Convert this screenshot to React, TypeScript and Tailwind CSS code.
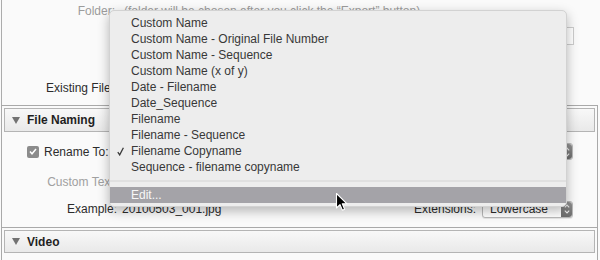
const menuItems = [
  'Custom Name',
  'Custom Name - Original File Number',
  'Custom Name - Sequence',
  'Custom Name (x of y)',
  'Date - Filename',
  'Date_Sequence',
  'Filename',
  'Filename - Sequence',
  'Filename Copyname',
  'Sequence - filename copyname',
]

function Triangle() {
  return (
    <svg width="8" height="7" viewBox="0 0 8 7" className="shrink-0">
      <polygon points="0,0 8,0 4,7" fill="#727272" />
    </svg>
  )
}

function SectionHeader({ title, tall }: { title: string; tall?: boolean }) {
  return (
    <div
      className={`flex items-center gap-[7px] border border-[#b4b4b4] bg-gradient-to-b from-[#f8f8f8] to-[#e9e9e9] pl-[7px] ${
        tall ? 'h-[24px]' : 'h-[23px]'
      }`}
    >
      <Triangle />
      <span className="font-bold text-[#1f1f1f]">{title}</span>
    </div>
  )
}

function Stepper() {
  return (
    <div className="flex w-[11px] shrink-0 flex-col items-center justify-center gap-[2px] rounded-r-[3px] bg-gradient-to-b from-[#929292] to-[#6c6c6c]">
      <svg width="6" height="4" viewBox="0 0 6 4">
        <polyline points="0.8,3.3 3,1 5.2,3.3" fill="none" stroke="#ededed" strokeWidth="1.1" />
      </svg>
      <svg width="6" height="4" viewBox="0 0 6 4">
        <polyline points="0.8,0.7 3,3 5.2,0.7" fill="none" stroke="#ededed" strokeWidth="1.1" />
      </svg>
    </div>
  )
}

function CheckMark() {
  return (
    <svg width="7" height="9" viewBox="0 0 7 9">
      <path d="M0.8 5.2 L2.7 7.9 L6.4 0.8" fill="none" stroke="#3a3a3a" strokeWidth="1.3" />
    </svg>
  )
}

export default function App() {
  return (
    <div className="relative h-[260px] w-[600px] overflow-hidden bg-[#fafafa] font-['Liberation_Sans',Arial,sans-serif] text-[12px] text-[#2c2c2c]">
      {/* export location (partly hidden) */}
      <div className="ml-[1px] h-[105px] border-l border-[#acacac] pt-[3px]">
        <div className="flex h-[16px] items-center text-[#9c9c9c]">
          <div className="w-[113px] text-right">Folder:</div>
          <div className="ml-[9px]">(folder will be chosen after you click the “Export” button)</div>
        </div>
        <div className="mt-[8px] flex h-[18px]">
          <div className="w-[120px]" />
          <div className="w-[452px] border border-[#cdcdcd] bg-white" />
        </div>
        <div className="mt-[35px] flex h-[16px] items-center">
          <div className="w-[118px] text-right">Existing Files:</div>
        </div>
      </div>

      {/* file naming */}
      <div className="ml-[1px] h-[123px] w-[597px] border border-[#a9a9a9] px-[2px] pt-[2px]">
        <SectionHeader title="File Naming" tall />
        <div className="mt-[11px] flex h-[17px] items-center pl-[23px]">
          <div className="flex h-[12px] w-[12px] items-center justify-center rounded-[2px] bg-[#8b8b8b]">
            <svg width="8" height="7" viewBox="0 0 8 7">
              <path d="M1 3.6 L3 5.8 L7 1" fill="none" stroke="#ffffff" strokeWidth="1.5" />
            </svg>
          </div>
          <span className="ml-[5px]">Rename To:</span>
          <div className="ml-[8px] mr-[22px] flex h-[17px] flex-1 rounded-[3px] border border-[#b9b9b9] bg-white">
            <div className="flex-1" />
            <Stepper />
          </div>
        </div>
        <div className="mt-[14px] flex h-[16px] items-center">
          <div className="w-[113px] text-right text-[#a0a0a0]">Custom Text:</div>
        </div>
        <div className="mt-[10px] flex h-[18px] items-center">
          <div className="w-[113px] text-right">Example:</div>
          <span className="ml-[5px]">20100503_001.jpg</span>
          <span className="ml-auto">Extensions:</span>
          <div className="ml-[6px] mr-[22px] flex h-[17px] w-[91px] rounded-[3px] border border-[#b9b9b9] bg-white shadow-[0_1px_0_rgba(0,0,0,0.08)]">
            <span className="flex-1 pl-[7px] leading-[15px]">Lowercase</span>
            <Stepper />
          </div>
        </div>
      </div>

      {/* video */}
      <div className="ml-[1px] h-[40px] w-[597px] border-x border-[#a9a9a9] px-[2px] pt-[2px]">
        <SectionHeader title="Video" />
      </div>

      {/* open popup menu */}
      <div className="absolute left-[109px] top-[10px] w-[458px] rounded-[5px] border border-[#d2d2d2] bg-[#ededed] pb-[3px] pt-[4px] text-[#383838] shadow-[0_4px_12px_rgba(0,0,0,0.28)]">
        {menuItems.map(item => (
          <div key={item} className="flex h-[16px] items-center">
            <span className="flex w-[21px] justify-start pl-[7px]">
              {item === 'Filename Copyname' && <CheckMark />}
            </span>
            <span>{item}</span>
          </div>
        ))}
        <div className="mt-[5px] h-[2px] bg-[#e0e0e0]" />
        <div className="mt-[5px] flex h-[16px] items-center bg-[#a4a3a8] pl-[21px] text-[#f7f7f7]">Edit...</div>
      </div>

      {/* mouse pointer */}
      <svg className="absolute left-[335px] top-[192px]" width="14" height="20" viewBox="0 0 14 20">
        <path
          d="M1.5 1.5 L1.5 16 L5 12.6 L7.4 18.2 L9.6 17.2 L7.3 11.8 L12 11.8 Z"
          fill="#000000"
          stroke="#ffffff"
          strokeWidth="1.1"
          strokeLinejoin="round"
        />
      </svg>
    </div>
  )
}
